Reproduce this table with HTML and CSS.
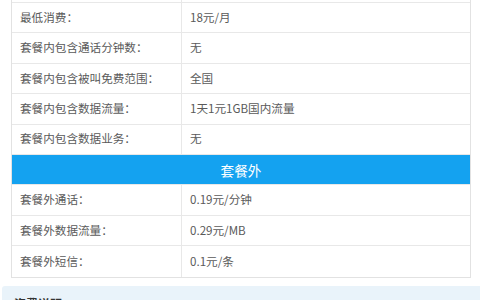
FILE: index.html
```html
<!DOCTYPE html>
<html lang="zh-CN">
<head>
<meta charset="utf-8">
<link rel="stylesheet" href="styles.css">
</head>
<body>
<div class="page">
  <div class="table">
    <div class="row stub"><div class="cell label"></div><div class="cell value"></div></div>
    <div class="row"><div class="cell label">最低消费：</div><div class="cell value">18元/月</div></div>
    <div class="row"><div class="cell label">套餐内包含通话分钟数：</div><div class="cell value">无</div></div>
    <div class="row"><div class="cell label">套餐内包含被叫免费范围：</div><div class="cell value">全国</div></div>
    <div class="row"><div class="cell label">套餐内包含数据流量：</div><div class="cell value">1天1元1GB国内流量</div></div>
    <div class="row"><div class="cell label">套餐内包含数据业务：</div><div class="cell value">无</div></div>
    <div class="row section">套餐外</div>
    <div class="row"><div class="cell label">套餐外通话：</div><div class="cell value">0.19元/分钟</div></div>
    <div class="row"><div class="cell label">套餐外数据流量：</div><div class="cell value">0.29元/MB</div></div>
    <div class="row"><div class="cell label">套餐外短信：</div><div class="cell value">0.1元/条</div></div>
  </div>
  <div class="note"><span class="note-title">资费说明</span></div>
</div>
</body>
</html>
```
FILE: styles.css
```css
* { box-sizing: border-box; }
html, body { margin: 0; padding: 0; background: #ffffff; }
body {
  width: 480px;
  height: 300px;
  overflow: hidden;
  font-family: "Noto Sans CJK SC", "Liberation Sans", sans-serif;
  color: #5a5a5a;
  font-size: 11.6px;
}
.page { display: flex; flex-direction: column; }
.table {
  margin-left: 11px;
  width: 460px;
  border-left: 1px solid #e2e2e2;
  border-right: 1px solid #e2e2e2;
  border-bottom: 1px solid #e2e2e2;
}
.row {
  display: grid;
  grid-template-columns: 170px 1fr;
  height: 30.4px;
  border-bottom: 1px solid #e8e8e8;
}
.row.stub { height: 3px; }
.row:last-child { border-bottom: none; height: 30.6px; }
.cell {
  display: flex;
  align-items: center;
  line-height: 1;
}
.label {
  padding-left: 8px;
  border-right: 1px solid #e8e8e8;
}
.value { padding-left: 8px; }
.section {
  display: flex;
  align-items: center;
  justify-content: center;
  background: #14a2f0;
  color: #ffffff;
  font-size: 13.6px;
  border-bottom: 1px solid #e8e8e8;
}
.note {
  margin-top: 8px;
  margin-left: 2px;
  height: 30px;
  background: #e9f3fa;
  border-radius: 3px 0 0 0;
  padding: 9px 0 0 12px;
  font-size: 12px;
  color: #333333;
  font-weight: bold;
}
```
